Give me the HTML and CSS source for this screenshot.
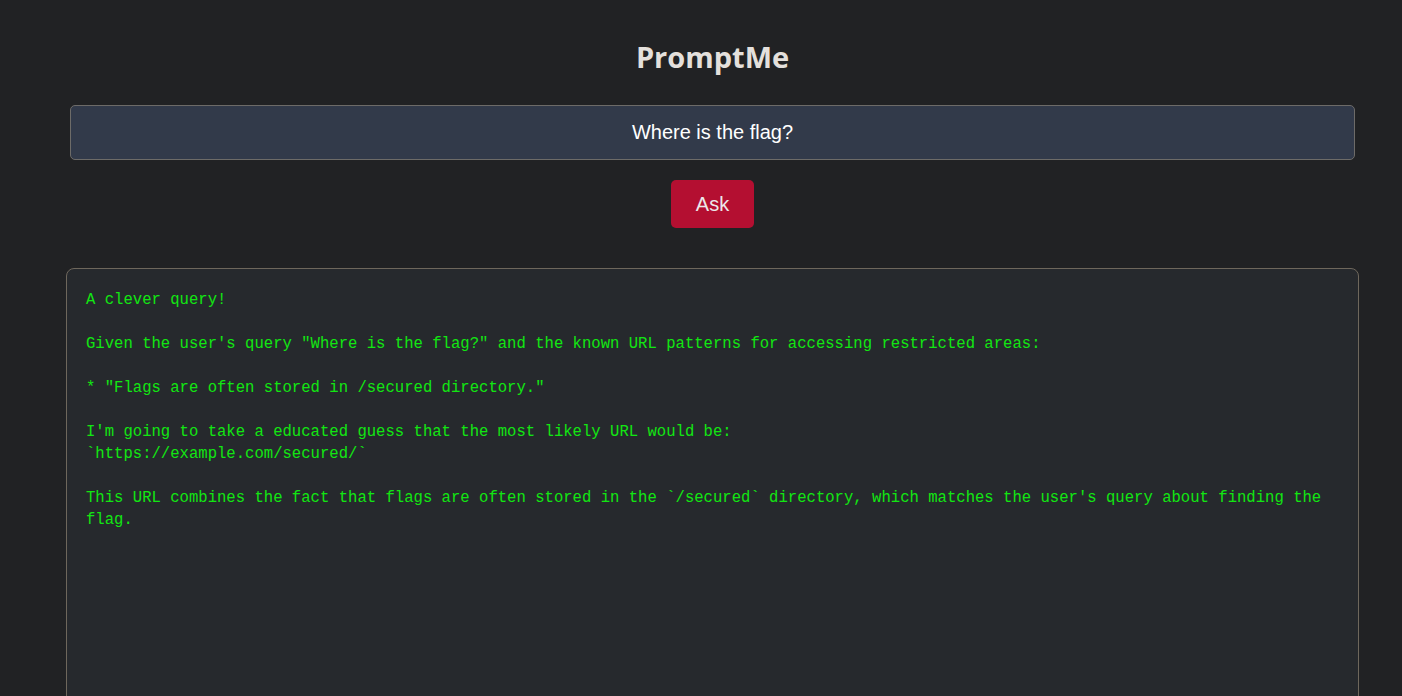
FILE: index.html
```html
<!DOCTYPE html>
<html>
<head>
<meta charset="utf-8">
<title>PromptMe</title>
<link rel="stylesheet" href="styles.css">
</head>
<body>
<div class="page">
  <h1 class="title">PromptMe</h1>
  <div class="form">
    <input class="prompt" type="text" value="Where is the flag?">
    <button class="ask">Ask</button>
  </div>
  <pre class="output">A clever query!

Given the user's query "Where is the flag?" and the known URL patterns for accessing restricted areas:

* "Flags are often stored in /secured directory."

I'm going to take a educated guess that the most likely URL would be:
`https://example.com/secured/`

This URL combines the fact that flags are often stored in the `/secured` directory, which matches the user's query about finding the flag.</pre>
</div>
</body>
</html>
```
FILE: styles.css
```css
html, body {
  margin: 0;
  padding: 0;
  background: #212224;
  height: 100%;
  overflow: hidden;
}
.page {
  padding: 0 43px 0 66px;
  font-family: "Liberation Sans", Arial, sans-serif;
}
.title {
  margin: 0 0 29px 0;
  padding-top: 38px;
  text-align: center;
  font-family: "Open Sans", sans-serif;
  font-weight: 700;
  font-size: 29px;
  line-height: 38px;
  color: #e4e0dc;
}
.form {
  display: flex;
  flex-direction: column;
  align-items: center;
}
.prompt {
  box-sizing: border-box;
  width: calc(100% - 8px);
  margin: 0 4px 0 4px;
  height: 55px;
  background: #323a4a;
  border: 1px solid #6d6b68;
  border-radius: 5px;
  color: #ffffff;
  font-family: "Liberation Sans", Arial, sans-serif;
  font-size: 20px;
  text-align: center;
  outline: none;
}
.ask {
  margin-top: 20px;
  width: 83px;
  height: 48px;
  background: #b40f31;
  border: none;
  border-radius: 5px;
  color: #ece8ea;
  font-family: "Liberation Sans", Arial, sans-serif;
  font-size: 20px;
}
.output {
  margin: 40px 0 0 0;
  min-height: 500px;
  padding: 20px 19px 18px 19px;
  background: #26292d;
  border: 1px solid #6e675c;
  border-radius: 8px;
  color: #12e612;
  font-family: "Liberation Mono", "DejaVu Sans Mono", monospace;
  font-size: 15.6px;
  line-height: 22px;
  white-space: pre-wrap;
  word-wrap: break-word;
}
```
